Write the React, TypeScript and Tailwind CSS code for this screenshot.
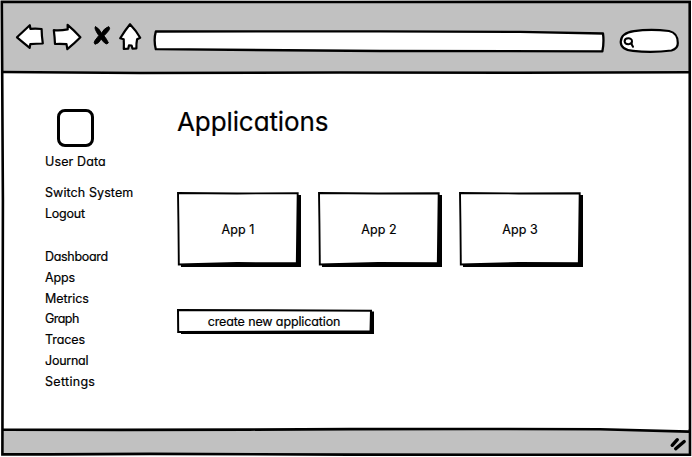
import type { ReactNode } from "react";

type Item = { label: string; spacing: string };

const account: Item[] = [
  { label: "Switch System", spacing: "tracking-[0.09px]" },
  { label: "Logout", spacing: "tracking-[-0.22px]" },
];

const navigation: Item[] = [
  { label: "Dashboard", spacing: "tracking-[-0.3px]" },
  { label: "Apps", spacing: "tracking-[-0.15px]" },
  { label: "Metrics", spacing: "tracking-[-0.08px]" },
  { label: "Graph", spacing: "tracking-[-0.55px]" },
  { label: "Traces", spacing: "tracking-[-0.1px]" },
  { label: "Journal", spacing: "tracking-[-0.25px]" },
  { label: "Settings", spacing: "tracking-[0.3px]" },
];

function BrowserIcons() {
  return (
    <svg className="h-10 w-32 shrink-0" viewBox="14 17 128 40" fill="white" stroke="black" strokeWidth="2.2" strokeLinejoin="round" strokeLinecap="round">
      <path d="M17 37.3 29.8 25.2 30.4 28.8Q36 28.2 41.6 29Q41.7 36 42.8 43.5Q36 43.6 30.3 44.1L29.7 47.8Q23.5 42.8 17 37.3Z" />
      <path d="M53.8 30.2Q60.5 30.8 67.7 29.4L67.6 24.9Q74 30.3 80.4 37.2Q74.5 43.2 67.3 49.2L66.5 44.2Q60.5 43.5 55 44Q54.7 37 53.8 30.2Z" />
      <path d="M95.5 26.8Q99 28 101.5 33.2Q104 28.3 108.7 26.6Q110.5 28 108.8 30.4Q106.8 33 104 35.8Q106.5 38.8 108.4 42.8Q107 45 104.7 43Q102.5 41 101.2 39Q98.8 43.7 95 44.3Q93.2 42.5 95.3 40Q97.2 37.7 98.8 35.5Q96.6 32.7 95.3 29.4Q94.4 27.6 95.5 26.8Z" fill="black" strokeWidth="0.9" />
      <path d="M130 24.2Q125 30.3 120.2 38.2L123.7 39.2Q124 44.5 123.8 49L128.2 48.7L129 45.3L131.6 45.5L132.5 48.7L136.4 48.3Q136.2 43.5 137.1 39.3L140.2 37.8Q136.5 31 130 24.2Z" />
    </svg>
  );
}

function SketchButton({ wide = false, children }: { wide?: boolean; children: ReactNode }) {
  return (
    <button className={wide ? "relative h-[25px] w-[198px] pt-0.5" : "relative h-[75px] w-[124px] pt-0.5"}>
      {wide ? (
        <svg className="absolute inset-0 h-full w-full" viewBox="0 0 198 25">
          <path d="M4 2.5H197V25H4Z" />
          <path d="M1 1 90 1.2 194 1.8 193.5 22.2 1.2 23Z" fill="white" stroke="black" strokeWidth="2" />
        </svg>
      ) : (
        <svg className="absolute inset-0 h-full w-full" viewBox="0 0 124 75">
          <path d="M4 3H124V75H4Z" />
          <path d="M1 1 60 1.5 120.7 1.2 119.8 71.3 60 71 1.8 72.5Q1.6 36 1 1Z" fill="white" stroke="black" strokeWidth="1.9" />
        </svg>
      )}
      <span className={wide ? "relative -left-[2px] tracking-[-0.12px]" : "relative -left-[1px] tracking-[0.05px]"}>{children}</span>
    </button>
  );
}

function Menu({ items }: { items: Item[] }) {
  return (
    <ul>
      {items.map(({ label, spacing }) => (
        <li key={label} className={spacing}>{label}</li>
      ))}
    </ul>
  );
}

export default function App() {
  return (
    <div className="relative flex h-[457px] w-[692px] flex-col overflow-hidden bg-white pt-px font-['Inter',sans-serif] text-[12.5px] leading-[20.83px] text-black [-webkit-text-stroke:0.2px_black] [font-feature-settings:'cv11']">
      <header className="mr-[2px] ml-[2px] flex h-[72px] shrink-0 items-start bg-[#c1c1c1] pt-4 pl-3">
        <BrowserIcons />
        <svg className="mt-3 ml-[11px] h-6 w-[453px] shrink-0" viewBox="153 29 453 24">
          <path d="M155.8 31.5 380 31.4 520 31.9 603 33.5Q604.2 42 602.4 51.3L380 51 155.8 49.2Q153.5 40 155.8 31.5Z" fill="white" stroke="black" strokeWidth="2.3" strokeLinejoin="round" />
        </svg>
        <svg className="mt-2.5 ml-3 h-7 w-16 shrink-0" viewBox="618 27 64 28">
          <path d="M634 31.2Q650 28.7 669 31Q678 33 677.8 43Q678 48.5 671.5 50.5Q652 53 633 50.9Q621 50 620.7 42Q621 33 634 31.2Z" fill="white" stroke="black" strokeWidth="2.2" />
          <path d="M632 41.3C632 45 625 45.2 624.6 41.4C624.7 37.5 632 37.2 632 41.3L631.6 44.2L633 46.8" fill="none" stroke="black" strokeWidth="2" strokeLinecap="round" />
        </svg>
      </header>

      <div className="flex min-h-0 flex-1 pl-[45px]">
        <aside className="w-[132px] shrink-0 pt-[36px]">
          <div className="ml-[12px] h-[38px] w-[37px] rounded-[8px] border-[3px] border-black" />
          <p className="mt-[5px] tracking-[0.13px]">User Data</p>
          <div className="mt-[10px]"><Menu items={account} /></div>
          <nav className="mt-[22.4px]"><Menu items={navigation} /></nav>
        </aside>
        <main className="pt-[33px]">
          <h1 className="text-[26px] leading-[32px] tracking-[-0.1px]">Applications</h1>
          <div className="mt-[54px] flex gap-[17px]">
            <SketchButton>App 1</SketchButton>
            <SketchButton>App 2</SketchButton>
            <SketchButton>App 3</SketchButton>
          </div>
          <div className="mt-[42px] flex">
            <SketchButton wide>create new application</SketchButton>
          </div>
        </main>
      </div>

      <footer className="mr-[2px] mb-[2px] ml-[2px] flex h-[26px] shrink-0 justify-end bg-[#c1c1c1] pt-[7px] pr-[2px]">
        <svg className="h-4 w-5" viewBox="668 436 20 16" stroke="black" strokeWidth="3.4" strokeLinecap="round">
          <path d="M672.2 445.3 677.3 439.7M675.7 448.7 684.2 441.5" />
        </svg>
      </footer>

      <svg className="pointer-events-none absolute inset-0 h-full w-full" viewBox="0 0 692 457" fill="none" stroke="black" strokeWidth="2.6">
        <path d="M600 427 688 427V431.6L600 429.3Z" fill="white" stroke="none" />
        <path d="M1.8 1.8 350 2 689.7 1.8 690 454.6 540 454.8 350 454.6 150 453.9 50 454.4 2.4 454.4 2.9 200Z" />
        <path d="M3 72 140 73 340 72.5 520 72.8 689 72.3" />
        <path d="M3 429.7 120 429.9 250 429.6 350 429.1 480 429 600 429.3 689 431.6" />
      </svg>
    </div>
  );
}
